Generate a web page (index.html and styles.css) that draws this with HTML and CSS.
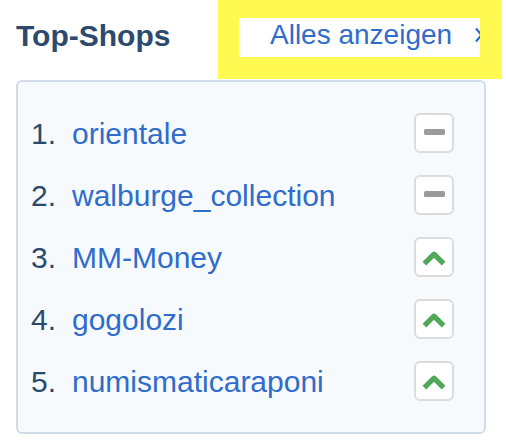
FILE: index.html
```html
<!DOCTYPE html>
<html lang="de">
<head>
<meta charset="utf-8">
<title>Top-Shops</title>
<link rel="stylesheet" href="styles.css">
</head>
<body>
<header class="header">
  <h1 class="title">Top-Shops</h1>
  <div class="highlight">
    <a class="all">Alles anzeigen<svg class="chevron" width="12" height="20" viewBox="0 0 12 20"><path d="M3 3.5l5.5 6.5L3 16.5" fill="none" stroke="currentColor" stroke-width="2.2"/></svg></a>
  </div>
</header>
<ol class="shops">
  <li class="shop"><span class="rank">1.</span><a class="name">orientale</a><span class="trend"><i class="same"></i></span></li>
  <li class="shop"><span class="rank">2.</span><a class="name">walburge_collection</a><span class="trend"><i class="same"></i></span></li>
  <li class="shop"><span class="rank">3.</span><a class="name">MM-Money</a><span class="trend"><svg class="up" viewBox="0 0 36 36"><path d="M8.4 24.6l9.6-9.4 9.6 9.4"/></svg></span></li>
  <li class="shop"><span class="rank">4.</span><a class="name">gogolozi</a><span class="trend"><svg class="up" viewBox="0 0 36 36"><path d="M8.4 24.6l9.6-9.4 9.6 9.4"/></svg></span></li>
  <li class="shop"><span class="rank">5.</span><a class="name">numismaticaraponi</a><span class="trend"><svg class="up" viewBox="0 0 36 36"><path d="M8.4 24.6l9.6-9.4 9.6 9.4"/></svg></span></li>
</ol>
</body>
</html>
```
FILE: styles.css
```css
* { box-sizing: border-box; }
body {
  margin: 0;
  height: 448px;
  overflow: hidden;
  background: #fff;
  color: #2c4a6e;
  font: 30px/40px "Liberation Sans", Arial, sans-serif;
}
.header {
  display: flex;
  justify-content: space-between;
  height: 80px;
  padding: 0 4px 0 16px;
}
.title {
  margin: 16px 0 0;
  font-size: 30px;
  line-height: 40px;
}
.highlight {
  width: 284px;
  height: 78.5px;
  border: solid #fff952;
  border-width: 18px 22px 22px 21.5px;
}
.all {
  display: flex;
  align-items: center;
  height: 100%;
  padding: 0 0 5px 31px;
  overflow: hidden;
  background: #fff;
  color: #2f6ccb;
  font-size: 28px;
  line-height: 34px;
  white-space: nowrap;
}
.chevron { flex: none; margin-left: 21px; }
.shops {
  width: 470px;
  height: 354px;
  margin: 0 0 0 16px;
  padding: 20px 30px 0 13px;
  border: 2px solid #d0dce8;
  border-radius: 6px;
  background: #f6fafd;
  list-style: none;
}
.shop { display: flex; align-items: center; height: 62px; }
.rank { width: 41px; padding-top: 2px; }
.name { flex: 1; padding-top: 2px; color: #2f6ccb; }
.trend {
  display: flex;
  align-items: center;
  justify-content: center;
  width: 40px;
  height: 40px;
  border: 2px solid #dcdcdc;
  border-radius: 6px;
  background: #fff;
}
.same {
  width: 21px;
  height: 6px;
  margin-bottom: 3px;
  border-radius: 1.5px;
  background: #9b9b9b;
}
.up {
  width: 36px;
  height: 36px;
  fill: none;
  stroke: #50a858;
  stroke-width: 5.3;
  stroke-linejoin: round;
}
```
